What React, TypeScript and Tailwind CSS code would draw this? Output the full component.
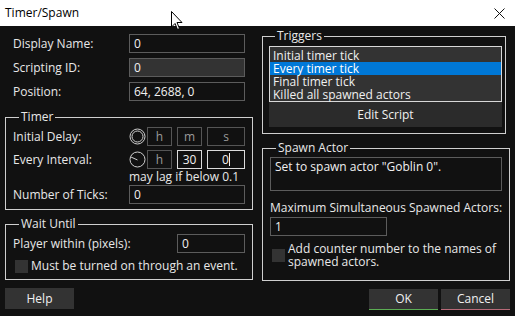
import type { ReactNode } from "react";

function Group({ title, className = "", children }: { title: string; className?: string; children: ReactNode }) {
  return (
    <fieldset className={`min-w-0 border border-[#cfcfcf] ${className}`}>
      <legend className="ml-[6px] px-[2px] text-[12px] leading-[14px] text-[#e8e8e8]">{title}</legend>
      {children}
    </fieldset>
  );
}

function Input({ value, className = "", disabled = false }: { value: string; className?: string; disabled?: boolean }) {
  return (
    <div
      className={`h-[19px] border border-[#5c5c5c] pl-[4px] text-[12px] leading-[17px] text-[#f0f0f0] ${
        disabled ? "bg-[#333333]" : "bg-[#111111]"
      } ${className}`}
    >
      {value}
    </div>
  );
}

function TimeBox({ value, active = false, className = "" }: { value: string; active?: boolean; className?: string }) {
  return (
    <div
      className={`h-[19px] flex items-center justify-center text-[12px] leading-none ${
        active ? "border border-[#dcdcdc] text-[#f0f0f0]" : "border border-[#555555] text-[#9a9a9a]"
      } ${className}`}
    >
      {value}
    </div>
  );
}

function Checkbox() {
  return <div className="w-[13px] h-[13px] bg-[#333333] shrink-0" />;
}

function Row({ label, children }: { label: string; children: ReactNode }) {
  return (
    <div className="flex items-center h-[19px]">
      <span className="w-[116px] text-[12px] text-[#e8e8e8]">{label}</span>
      {children}
    </div>
  );
}

export default function App() {
  const triggers = ["Initial timer tick", "Every timer tick", "Final timer tick", "Killed all spawned actors"];

  return (
    <div className="relative w-[515px] h-[316px] bg-[#111111] flex flex-col overflow-hidden font-['Open_Sans','Noto_Sans',sans-serif] text-[12px]">
      {/* title bar */}
      <div className="h-[26px] bg-white flex items-center pl-[5px] pr-[10px] shrink-0">
        <span className="text-[12px] text-black">Timer/Spawn</span>
        <svg className="ml-auto" width="11" height="11" viewBox="0 0 11 11">
          <path d="M0.5 0.5 L10.5 10.5 M10.5 0.5 L0.5 10.5" stroke="#111" strokeWidth="1" />
        </svg>
      </div>

      {/* mouse cursor */}
      <svg className="absolute left-[171px] top-[11px]" width="13" height="20" viewBox="0 0 13 20">
        <path d="M0.5 0.5 L0.5 16 L4 12.5 L6.5 18.5 L8.5 17.5 L6 11.5 L11 11.5 Z" fill="#fff" stroke="#000" strokeWidth="1" strokeLinejoin="round" />
      </svg>

      <div className="flex pl-[5px] text-[#e8e8e8]">
        {/* left column */}
        <div className="w-[248px] flex flex-col">
          <div className="pt-[8px] pl-[8px] flex flex-col gap-[5px]">
            <Row label="Display Name:">
              <Input value="0" className="w-[116px]" />
            </Row>
            <Row label="Scripting ID:">
              <Input value="0" className="w-[116px]" disabled />
            </Row>
            <Row label="Position:">
              <Input value="64, 2688, 0" className="w-[116px]" />
            </Row>
          </div>

          <Group title="Timer" className="mt-[9px] pl-[7px] pr-[7px] pt-[3px] pb-[5px]">
            <div className="flex flex-col">
              <Row label="Initial Delay:">
                <svg width="17" height="17" viewBox="0 0 17 17" className="shrink-0">
                  <circle cx="8.5" cy="8.5" r="7.5" fill="none" stroke="#cfcfcf" strokeWidth="1" />
                  <circle cx="8.5" cy="8.5" r="5.5" fill="none" stroke="#cfcfcf" strokeWidth="1" />
                </svg>
                <TimeBox value="h" className="ml-[1px] w-[25px]" />
                <TimeBox value="m" className="ml-[5px] w-[25px]" />
                <TimeBox value="s" className="ml-[5px] w-[38px]" />
              </Row>
              <div className="mt-[4px]">
                <Row label="Every Interval:">
                  <svg width="17" height="17" viewBox="0 0 17 17" className="shrink-0">
                    <circle cx="8.5" cy="8.5" r="7.5" fill="none" stroke="#cfcfcf" strokeWidth="1" />
                    <path d="M8.5 9 L2 6" stroke="#cfcfcf" strokeWidth="1" />
                  </svg>
                  <TimeBox value="h" className="ml-[1px] w-[25px]" />
                  <TimeBox value="30" active className="ml-[5px] w-[25px]" />
                  <div className="ml-[5px] w-[38px] h-[19px] border border-[#dcdcdc] flex items-center justify-center text-[#f0f0f0] leading-none">
                    0<span className="w-px h-[13px] bg-[#f0f0f0]" />
                  </div>
                </Row>
              </div>
              <div className="pl-[116px] h-[15px] leading-[15px] whitespace-nowrap text-[#e8e8e8]">may lag if below 0.1</div>
              <div className="mt-[1px]">
                <Row label="Number of Ticks:">
                  <Input value="0" className="w-[116px]" />
                </Row>
              </div>
            </div>
          </Group>

          <Group title="Wait Until" className="mt-[7px] pl-[7px] pr-[7px] pt-[3px] pb-[6px]">
            <div className="flex items-center h-[19px]">
              <span className="w-[164px]">Player within (pixels):</span>
              <Input value="0" className="w-[68px]" />
            </div>
            <div className="mt-[6px] flex items-center gap-[3px] pl-[2px]">
              <Checkbox />
              <span className="leading-[14px] whitespace-nowrap">Must be turned on through an event.</span>
            </div>
          </Group>

          <button className="mt-[8px] w-[69px] h-[21px] bg-[#333333] text-[#f0f0f0] text-[12px]">Help</button>
        </div>

        {/* right column */}
        <div className="ml-[9px] w-[248px] flex flex-col">
          <Group title="Triggers" className="mt-[3px] w-[244px] pl-[6px] pr-[3px] pt-[3px] pb-[6px]">
            <div className="border border-[#d8d8d8] bg-[#333333] pt-[2px] pb-[1px] h-[56px]">
              {triggers.map((t, i) => (
                <div
                  key={t}
                  className={`h-[13px] leading-[13px] pl-[3px] ${i === 1 ? "bg-[#0078d7] text-white" : "text-[#f0f0f0]"}`}
                >
                  {t}
                </div>
              ))}
            </div>
            <button className="w-full h-[25px] bg-[#2b2b2b] text-[#f0f0f0] text-[12px]">Edit Script</button>
          </Group>

          <Group title="Spawn Actor" className="mt-[7px] pl-[7px] pr-[7px] pt-[2px] pb-[12px]">
            <div className="h-[34px] border border-[#5c5c5c] pl-[4px] pt-[1px] leading-[16px] text-[#f0f0f0]">
              Set to spawn actor "Goblin 0".
            </div>
            <div className="mt-[9px] leading-[16px] whitespace-nowrap">Maximum Simultaneous Spawned Actors:</div>
            <Input value="1" className="mt-[1px] w-[117px]" />
            <div className="mt-[6px] flex items-center gap-[3px] pl-[2px]">
              <Checkbox />
              <span className="leading-[13px] whitespace-nowrap">
                Add counter number to the names of
                <br />
                spawned actors.
              </span>
            </div>
          </Group>

          <div className="mt-[8px] flex justify-end gap-[3px]">
            <button className="w-[69px] h-[21px] bg-[#333333] border-b border-[#5cae54] text-[#f0f0f0] text-[12px]">OK</button>
            <button className="w-[69px] h-[21px] bg-[#333333] border-b border-[#b86a78] text-[#f0f0f0] text-[12px]">Cancel</button>
          </div>
        </div>
      </div>
    </div>
  );
}
